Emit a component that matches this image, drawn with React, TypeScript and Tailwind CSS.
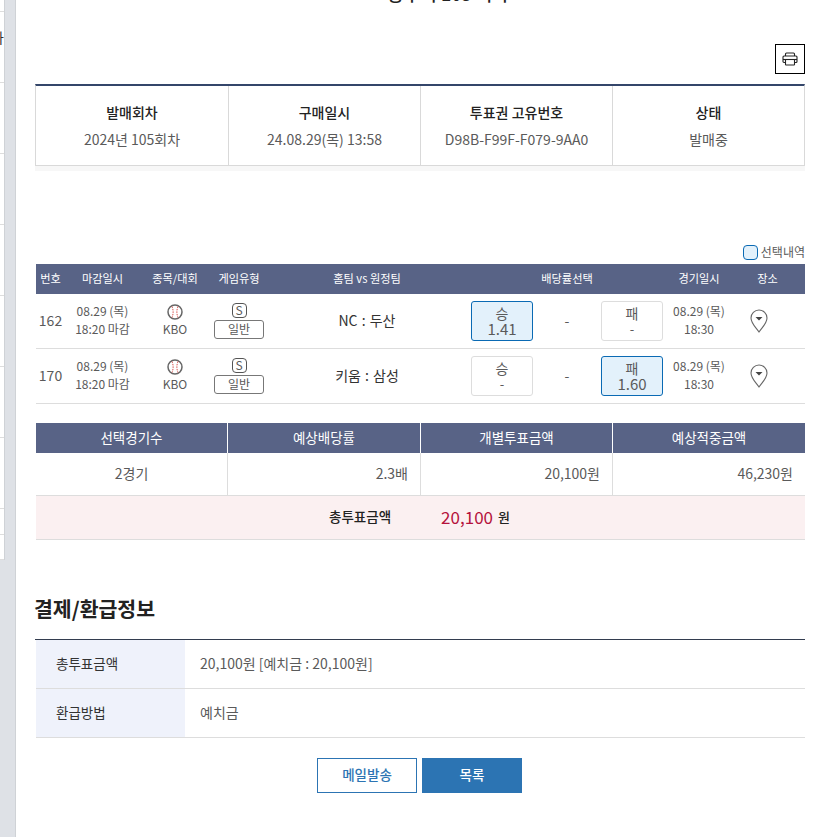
const font = "font-['Noto_Sans_CJK_KR','Noto_Sans',sans-serif]";

const ticketInfo = [
  { label: "발매회차", value: "2024년 105회차" },
  { label: "구매일시", value: "24.08.29(목) 13:58" },
  { label: "투표권 고유번호", value: "D98B-F99F-F079-9AA0" },
  { label: "상태", value: "발매중" },
];

const games = [
  { no: "162", match: "NC : 두산", win: "1.41", lose: "-", picked: "win" },
  { no: "170", match: "키움 : 삼성", win: "-", lose: "1.60", picked: "lose" },
];

const gridCols = "grid grid-cols-[29px_75px_70px_58px_198px_202px_62px_75px]";

function PrintIcon() {
  return (
    <svg width="16" height="14" viewBox="0 0 16 14" fill="none" stroke="#222" strokeWidth="1.1">
      <path d="M3.500 4V2a1 1 0 0 1 1-1h7a1 1 0 0 1 1 1v2" />
      <path d="M3.500 10.500H2a1 1 0 0 1-1-1V5a1 1 0 0 1 1-1h12a1 1 0 0 1 1 1v4.500a1 1 0 0 1-1 1h-1.500" />
      <path d="M1 7.500h14" />
      <rect x="3.500" y="7.500" width="9" height="5.500" rx="0.500" />
    </svg>
  );
}

function Baseball() {
  return (
    <svg width="16" height="16" viewBox="0 0 16 16" fill="none">
      <circle cx="8" cy="8" r="7" stroke="#666" strokeWidth="1.500" />
      <path d="M5 2.500c1.500 3.500 1.500 7.500 0 11M11 2.500c-1.500 3.500-1.500 7.500 0 11" stroke="#d9534f" strokeWidth="1" strokeDasharray="1.500 1" />
    </svg>
  );
}

function Pin() {
  return (
    <svg width="18" height="24" viewBox="0 0 18 24" fill="none">
      <path d="M9 23C5 17.500 1 14 1 9a8 8 0 0 1 16 0c0 5-4 8.500-8 14Z" stroke="#666" strokeWidth="1.100" />
      <path d="M5.500 8h7L9 11.500Z" fill="#444" />
    </svg>
  );
}

function OddsBox({ label, value, picked }: { label: string; value: string; picked: boolean }) {
  return (
    <div
      className={`flex h-10 w-[62px] flex-col items-center justify-center rounded-[3px] border leading-[16px] ${
        picked ? "border-[#0a6ab4] bg-[#e3f1fb]" : "border-[#ddd] bg-white"
      }`}
    >
      <span className="text-[14px]">{label}</span>
      <span className={picked ? "text-[15px]" : "text-[13px]"}>{value}</span>
    </div>
  );
}

export default function App() {
  return (
    <div className={`${font} flex h-[837px] w-[825px] overflow-hidden bg-white text-[14px] text-[#5a5a5a]`}>
      {/* left page edge */}
      <div className="w-4 shrink-0 border-r border-[#cfd2d6] bg-[#dee1e6]">
        <div className="w-[5px] border-r border-[#cfd2d6] bg-white">
          <div className="h-3 border-b border-[#ddd]" />
          <div className="flex h-[71px] justify-end overflow-hidden border-b border-[#ddd] pt-[17px] text-[14px] leading-4 text-[#333]">
            <span className="shrink-0">가</span>
          </div>
          {[0, 1, 2, 3, 4, 5].map((i) => (
            <div key={i} className="h-[71px] border-b border-[#ddd]" />
          ))}
          <div className="h-[26px] border-b border-[#ddd]" />
          <div className="h-[25px] border-b border-[#ddd]" />
        </div>
      </div>

      <main className="w-[809px] shrink-0 pl-[19px] pr-[20px]">
        <h1 className="-mt-[18px] h-[62px] pl-[56px] text-center text-[18px] font-medium leading-[22px] text-[#222]">
          승부식 105 회차
        </h1>

        <div className="flex justify-end">
          <button className="flex size-[30px] items-center justify-center border border-black">
            <PrintIcon />
          </button>
        </div>

        <div className="mt-[10px] grid grid-cols-4 border border-t-2 border-[#d9d9d9] border-t-[#34466a] shadow-[0_5px_0_#f7f7f7]">
          {ticketInfo.map((item, i) => (
            <div key={item.label} className={`h-[79px] pt-[13px] text-center ${i > 0 ? "border-l border-[#d9d9d9]" : ""}`}>
              <div className="font-medium leading-[26px] text-[#222]">{item.label}</div>
              <div className="mt-px leading-[26px]">{item.value}</div>
            </div>
          ))}
        </div>

        <div className="mt-[76px] flex h-[22px] items-center justify-end gap-[3px] pb-[2px] text-[12px]">
          <span className="size-[15px] rounded-[4px] border border-[#0a6ab4] bg-[#e3f1fb]" />
          선택내역
        </div>

        <div className={`${gridCols} ml-px h-[30px] items-center bg-[#586386] pb-[2px] text-center text-[11.2px] text-white`}>
          <div>번호</div>
          <div>마감일시</div>
          <div>종목/대회</div>
          <div>게임유형</div>
          <div>홈팀 vs 원정팀</div>
          <div>배당률선택</div>
          <div>경기일시</div>
          <div>장소</div>
        </div>

        {games.map((g) => (
          <div key={g.no} className={`${gridCols} ml-px h-[55px] items-center border-b border-[#ddd] text-center`}>
            <div className="pb-[2px] text-[14px]">{g.no}</div>
            <div className="pb-[2px] text-[12px] leading-[18px]">
              <div>08.29 (목)</div>
              <div>18:20 마감</div>
            </div>
            <div className="flex flex-col items-center text-[12px] leading-[18px]">
              <Baseball />
              KBO
            </div>
            <div className="flex flex-col items-center gap-[2px]">
              <span className="flex size-[15px] items-center justify-center rounded-[4px] border border-[#555] pb-px text-[12px] leading-none">S</span>
              <span className="flex h-[19px] w-[50px] items-center justify-center rounded-[3px] border border-[#777] pb-px text-[12px] leading-none">일반</span>
            </div>
            <div className="pb-[2px] text-[#333] [word-spacing:1px]">{g.match}</div>
            <div className="flex items-center justify-between px-[5px]">
              <OddsBox label="승" value={g.win} picked={g.picked === "win"} />
              <span className="pb-[2px]">-</span>
              <OddsBox label="패" value={g.lose} picked={g.picked === "lose"} />
            </div>
            <div className="pb-[2px] text-[12px] leading-[18px]">
              <div>08.29 (목)</div>
              <div>18:30</div>
            </div>
            <div className="flex justify-start pl-5">
              <Pin />
            </div>
          </div>
        ))}

        <div className="ml-px mt-[19px] grid grid-cols-[191px_193px_192px_193px]">
          {["선택경기수", "예상배당률", "개별투표금액", "예상적중금액"].map((h, i) => (
            <div key={h} className={`flex h-[30px] items-center justify-center bg-[#586386] pb-[2px] text-[13.5px] text-white ${i > 0 ? "border-l border-white" : ""}`}>
              {h}
            </div>
          ))}
          <div className="flex h-[43px] items-center justify-center border-b border-[#ddd] pb-[2px]">2경기</div>
          <div className="flex h-[43px] items-center justify-end border-b border-l border-[#ddd] pb-[2px] pr-3">2.3배</div>
          <div className="flex h-[43px] items-center justify-end border-b border-l border-[#ddd] pb-[2px] pr-3">20,100원</div>
          <div className="flex h-[43px] items-center justify-end border-b border-l border-[#ddd] pb-[2px] pr-3">46,230원</div>
        </div>

        <div className="ml-px flex h-[44px] items-center border-b border-[#ddd] bg-[#fbf0f1] pb-[2px] pl-[293px] font-medium text-[#222]">
          <span className="text-[13.5px]">총투표금액</span>
          <span className="ml-[50px] text-[17px] font-normal text-[#b5123c]">20,100</span>
          <span className="ml-[5px] text-[13px]">원</span>
        </div>

        <h2 className="-ml-px mt-[53px] text-[20.5px] font-bold leading-[30px] text-[#222]">결제/환급정보</h2>

        <div className="mt-4 border-t border-[#333d4f]">
          <div className="ml-px flex h-[49px] items-center border-b border-[#ddd]">
            <div className="flex h-full w-[149px] items-center bg-[#eff2fb] pb-[2px] pl-5 text-[13.5px] text-[#333]">총투표금액</div>
            <div className="pb-[2px] pl-[15px]">20,100원 [예치금 : 20,100원]</div>
          </div>
          <div className="ml-px flex h-[49px] items-center border-b border-[#ddd]">
            <div className="flex h-full w-[149px] items-center bg-[#eff2fb] pb-[2px] pl-5 text-[13.5px] text-[#333]">환급방법</div>
            <div className="pb-[2px] pl-[15px]">예치금</div>
          </div>
        </div>

        <div className="mt-5 flex justify-center gap-[5px] pr-px">
          <button className="h-[35px] w-[100px] border border-[#2c74b3] pb-[2px] text-[13.5px] font-medium text-[#2c74b3]">메일발송</button>
          <button className="h-[35px] w-[100px] bg-[#2c74b3] pb-[2px] text-[13.5px] font-medium text-white">목록</button>
        </div>
      </main>
    </div>
  );
}
